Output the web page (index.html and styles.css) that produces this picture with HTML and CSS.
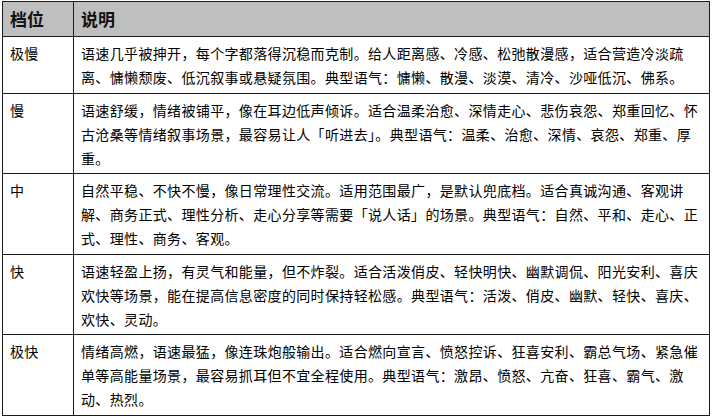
FILE: index.html
```html
<!DOCTYPE html>
<html lang="zh">
<head>
<meta charset="utf-8">
<link rel="stylesheet" href="styles.css">
</head>
<body>
<table class="speed-table">
  <thead>
    <tr><th class="col-level">档位</th><th class="col-desc">说明</th></tr>
  </thead>
  <tbody>
    <tr>
      <td class="col-level">极慢</td>
      <td class="col-desc">语速几乎被抻开，每个字都落得沉稳而克制。给人距离感、冷感、松弛散漫感，适合营造冷淡疏<br>离、慵懒颓废、低沉叙事或悬疑氛围。典型语气：慵懒、散漫、淡漠、清冷、沙哑低沉、佛系。</td>
    </tr>
    <tr>
      <td class="col-level">慢</td>
      <td class="col-desc">语速舒缓，情绪被铺平，像在耳边低声倾诉。适合温柔治愈、深情走心、悲伤哀怨、郑重回忆、怀<br>古沧桑等情绪叙事场景，最容易让人「听进去」。典型语气：温柔、治愈、深情、哀怨、郑重、厚<br>重。</td>
    </tr>
    <tr>
      <td class="col-level">中</td>
      <td class="col-desc">自然平稳、不快不慢，像日常理性交流。适用范围最广，是默认兜底档。适合真诚沟通、客观讲<br>解、商务正式、理性分析、走心分享等需要「说人话」的场景。典型语气：自然、平和、走心、正<br>式、理性、商务、客观。</td>
    </tr>
    <tr>
      <td class="col-level">快</td>
      <td class="col-desc">语速轻盈上扬，有灵气和能量，但不炸裂。适合活泼俏皮、轻快明快、幽默调侃、阳光安利、喜庆<br>欢快等场景，能在提高信息密度的同时保持轻松感。典型语气：活泼、俏皮、幽默、轻快、喜庆、<br>欢快、灵动。</td>
    </tr>
    <tr>
      <td class="col-level">极快</td>
      <td class="col-desc">情绪高燃，语速最猛，像连珠炮般输出。适合燃向宣言、愤怒控诉、狂喜安利、霸总气场、紧急催<br>单等高能量场景，最容易抓耳但不宜全程使用。典型语气：激昂、愤怒、亢奋、狂喜、霸气、激<br>动、热烈。</td>
    </tr>
  </tbody>
</table>
</body>
</html>
```
FILE: styles.css
```css
html, body {
  margin: 0;
  padding: 0;
  background: #ffffff;
}

body {
  font-family: "Noto Sans CJK SC", "Noto Sans", sans-serif;
  color: #000000;
}

.speed-table {
  margin: 1px 0 0 2px;
  width: 708px;
  border-collapse: collapse;
  table-layout: fixed;
}

.speed-table th,
.speed-table td {
  border: 1px solid #1a1a1a;
  text-align: left;
  vertical-align: top;
}

.speed-table th {
  background: #bfbfbf;
  font-size: 17px;
  font-weight: 700;
  line-height: 22px;
  padding: 6px 7px;
  color: #111111;
}

.speed-table td {
  font-size: 14px;
  letter-spacing: 0.35px;
  line-height: 24px;
  padding: 4px 7px 3.5px 7px;
  white-space: nowrap;
}

.col-level {
  width: 56px;
}
```
